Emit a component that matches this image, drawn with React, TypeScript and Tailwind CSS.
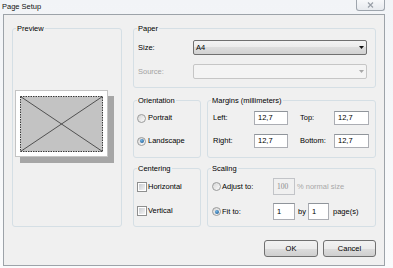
import React from "react";

function Group({ label, className, children }: { label: string; className: string; children?: React.ReactNode }) {
  return (
    <div className={"relative border border-[#d5dfe5] rounded-[3px] shrink-0 " + className}>
      <span className="absolute left-[3px] top-[-5px] px-[1px] bg-[#f0f0f0] leading-[9px] whitespace-nowrap">{label}</span>
      {children}
    </div>
  );
}

function Radio({ checked }: { checked?: boolean }) {
  return (
    <span className="w-[9px] h-[9px] rounded-full border border-[#9a9b9b] bg-linear-to-br from-[#d6d6d6] to-[#fbfbfb] flex items-center justify-center shrink-0">
      {checked && <span className="w-[4px] h-[4px] rounded-full bg-[radial-gradient(circle_at_40%_35%,#6fb4e4,#164f88)]" />}
    </span>
  );
}

function Check() {
  return (
    <span className="w-[10px] h-[10px] border border-[#8e8f8f] bg-white p-[1px] shrink-0 flex">
      <span className="flex-1 bg-linear-to-br from-[#c9ccd1] to-[#f4f4f4]" />
    </span>
  );
}

function Input({ value, className }: { value: string; className: string }) {
  return (
    <div className={"border border-[#abadb3] border-t-[#8f949a] bg-white pl-[3px] flex items-center shrink-0 " + className}>
      {value}
    </div>
  );
}

function Arrow({ color }: { color: string }) {
  return (
    <svg width="5" height="3" viewBox="0 0 5 3" className="ml-auto mr-[2px]">
      <polygon points="0,0 5,0 2.5,3" fill={color} />
    </svg>
  );
}

export default function App() {
  return (
    <div className="w-[393px] h-[268px] bg-linear-to-b from-[#f2f4f7] to-[#fafbfc] font-['Liberation_Sans',Arial,sans-serif] text-[7.5px] text-black overflow-hidden">
      <div className="h-[14px] flex items-start">
        <span className="ml-[2px] mt-[2px] leading-[9px] text-[#111]">Page Setup</span>
        <div className="ml-auto mr-[8px] w-[29px] h-[11px] border border-t-0 border-[#9ea5ad] rounded-b-[3px] bg-linear-to-b from-[#f7f8fa] to-[#e7eaee] flex items-center justify-center">
          <svg width="7" height="6" viewBox="0 0 7 6">
            <path d="M1 0.5 L6 5.5 M6 0.5 L1 5.5" stroke="#9aa0a8" strokeWidth="1.2" />
          </svg>
        </div>
      </div>
      <div className="ml-[3px] w-[382px] h-[252px] border border-[#9da3a9] bg-[#f0f0f0] pt-[13px] px-[8px]">
        <div className="flex gap-[11px]">
          <Group label="Preview" className="w-[110px] h-[199px]">
            <svg width="99" height="73" viewBox="0 0 99 73" className="block ml-[2px] mt-[61px]">
              <rect x="5" y="6" width="94" height="67" fill="#a6a6a6" />
              <rect x="0.5" y="0.5" width="92" height="66" fill="#ffffff" stroke="#c4c4c4" />
              <rect x="5.5" y="6.5" width="82" height="55" fill="#c3c3c3" stroke="#3a3a3a" strokeDasharray="1.5 1" />
              <path d="M5.5 6.5 L87.5 61.5 M5.5 61.5 L87.5 6.5" stroke="#444" strokeWidth="0.9" />
            </svg>
          </Group>
          <div className="w-[243px] flex flex-col">
            <Group label="Paper" className="w-[243px] h-[60px] pt-[11px] pl-[4px]">
              <div className="flex items-center h-[15px]">
                <span className="w-[55px] shrink-0">Size:</span>
                <div className="w-[174px] h-[15px] border border-[#707070] rounded-[2px] bg-[linear-gradient(#f3f3f3_0%,#ebebeb_50%,#dddddd_50%,#d2d2d2_100%)] flex items-center pl-[2px]">
                  <span>A4</span>
                  <Arrow color="#111" />
                </div>
              </div>
              <div className="flex items-center h-[15px] mt-[9px]">
                <span className="w-[55px] shrink-0 text-[#a3a3a3]">Source:</span>
                <div className="w-[174px] h-[15px] border border-[#c6c6c6] rounded-[2px] bg-[#f4f4f4] flex items-center">
                  <Arrow color="#a8a8a8" />
                </div>
              </div>
            </Group>
            <div className="flex gap-[6px] mt-[12px]">
              <Group label="Orientation" className="w-[68px] h-[58px] pt-[10px] pl-[3px]">
                <div className="flex flex-col gap-[9px]">
                  <div className="flex items-center h-[14px] gap-[2px]">
                    <Radio />
                    <span>Portrait</span>
                  </div>
                  <div className="flex items-center h-[14px] gap-[2px]">
                    <Radio checked />
                    <span>Landscape</span>
                  </div>
                </div>
              </Group>
              <Group label="Margins (millimeters)" className="w-[169px] h-[58px] pt-[10px] pl-[5px]">
                <div className="flex flex-col gap-[9px]">
                  <div className="flex items-center h-[14px]">
                    <span className="w-[41px] shrink-0">Left:</span>
                    <Input value="12,7" className="w-[34px] h-[14px]" />
                    <span className="w-[34px] shrink-0 ml-[12px]">Top:</span>
                    <Input value="12,7" className="w-[35px] h-[14px]" />
                  </div>
                  <div className="flex items-center h-[14px]">
                    <span className="w-[41px] shrink-0">Right:</span>
                    <Input value="12,7" className="w-[34px] h-[14px]" />
                    <span className="w-[34px] shrink-0 ml-[12px]">Bottom:</span>
                    <Input value="12,7" className="w-[35px] h-[14px]" />
                  </div>
                </div>
              </Group>
            </div>
            <div className="flex gap-[6px] mt-[10px]">
              <Group label="Centering" className="w-[68px] h-[59px] pt-[11px] pl-[3px]">
                <div className="flex flex-col gap-[10px]">
                  <div className="flex items-center h-[14px] gap-[1px]">
                    <Check />
                    <span>Horizontal</span>
                  </div>
                  <div className="flex items-center h-[14px] gap-[1px]">
                    <Check />
                    <span>Vertical</span>
                  </div>
                </div>
              </Group>
              <Group label="Scaling" className="w-[169px] h-[59px] pt-[9px] pl-[4px]">
                <div className="flex flex-col gap-[8px]">
                  <div className="flex items-center h-[17px]">
                    <Radio />
                    <span className="w-[51px] ml-[1px] shrink-0">Adjust to:</span>
                    <div className="w-[22px] h-[17px] border border-[#c2c4c8] bg-[#f0f0f0] text-[#8a8a8a] pl-[3px] flex items-center shrink-0 font-['Liberation_Serif',serif]">100</div>
                    <span className="ml-[2px] text-[#a8a8a8]">% normal size</span>
                  </div>
                  <div className="flex items-center h-[17px]">
                    <Radio checked />
                    <span className="w-[51px] ml-[1px] shrink-0">Fit to:</span>
                    <Input value="1" className="w-[22px] h-[17px]" />
                    <span className="ml-[3px] w-[10px] shrink-0">by</span>
                    <Input value="1" className="w-[21px] h-[17px]" />
                    <span className="ml-[4px]">page(s)</span>
                  </div>
                </div>
              </Group>
            </div>
          </div>
        </div>
        <div className="flex justify-end gap-[5px] mt-[13px]">
          <button className="w-[54px] h-[17px] border border-[#707070] rounded-[3px] bg-[linear-gradient(#f2f2f2_0%,#ebebeb_50%,#dddddd_50%,#cfcfcf_100%)] flex items-center justify-center">OK</button>
          <button className="w-[53px] h-[17px] border border-[#707070] rounded-[3px] bg-[linear-gradient(#f2f2f2_0%,#ebebeb_50%,#dddddd_50%,#cfcfcf_100%)] flex items-center justify-center">Cancel</button>
        </div>
      </div>
    </div>
  );
}
